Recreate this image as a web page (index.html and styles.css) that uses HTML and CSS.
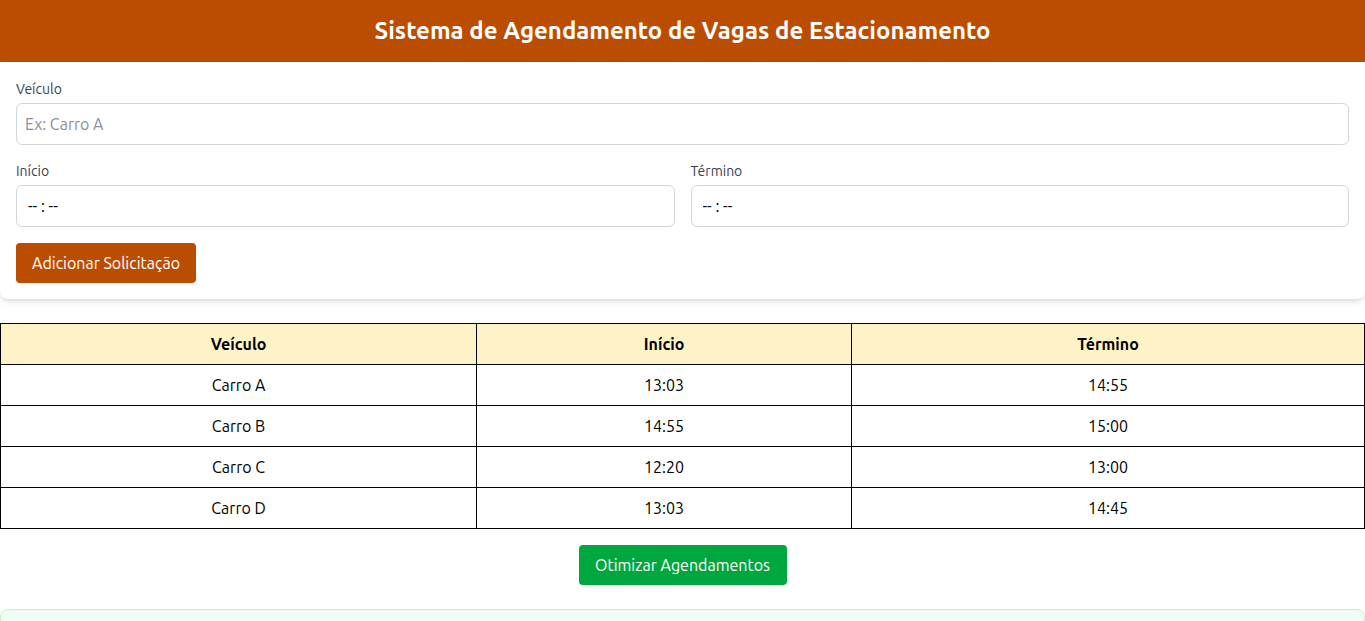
FILE: index.html
```html
<!DOCTYPE html>
<html lang="pt-BR">
<head>
<meta charset="utf-8">
<title>Sistema de Agendamento de Vagas de Estacionamento</title>
<link rel="stylesheet" href="styles.css">
</head>
<body>
<header class="topbar">
  <h1 class="title">Sistema de Agendamento de Vagas de Estacionamento</h1>
</header>
<main>
  <section class="card">
    <div class="field-group">
      <label class="label">Veículo</label>
      <input class="field" type="text" placeholder="Ex: Carro A">
    </div>
    <div class="row">
      <div class="field-group">
        <label class="label">Início</label>
        <input class="field time" type="text" value="-- : --">
      </div>
      <div class="field-group">
        <label class="label">Término</label>
        <input class="field time" type="text" value="-- : --">
      </div>
    </div>
    <button class="btn btn-add">Adicionar Solicitação</button>
  </section>

  <table class="grid">
    <colgroup>
      <col class="c1"><col class="c2"><col class="c3">
    </colgroup>
    <thead>
      <tr><th>Veículo</th><th>Início</th><th>Término</th></tr>
    </thead>
    <tbody>
      <tr><td>Carro A</td><td>13:03</td><td>14:55</td></tr>
      <tr><td>Carro B</td><td>14:55</td><td>15:00</td></tr>
      <tr><td>Carro C</td><td>12:20</td><td>13:00</td></tr>
      <tr><td>Carro D</td><td>13:03</td><td>14:45</td></tr>
    </tbody>
  </table>

  <div class="actions">
    <button class="btn btn-opt">Otimizar Agendamentos</button>
  </div>

  <section class="result">
    <h2 class="result-title">Resultado</h2>
  </section>
</main>
</body>
</html>
```

FILE: styles.css
```css
html { scrollbar-width: none; }
html::-webkit-scrollbar { width: 0; height: 0; }
* { box-sizing: border-box; }
body {
  margin: 0;
  font-family: Ubuntu, Lato, "Noto Sans", sans-serif;
  color: #000;
  background: #fff;
}
.topbar {
  background: #bb4d00;
  padding: 15px 16px 15px;
  text-align: center;
}
.title {
  margin: 0;
  color: #fff;
  font-size: 24px;
  line-height: 32px;
  font-weight: 700;
}
.card {
  background: #fff;
  padding: 17px 16px 16px;
  border-radius: 0 0 8px 8px;
  box-shadow: 0 4px 6px -1px rgba(0,0,0,0.1), 0 2px 4px -2px rgba(0,0,0,0.1);
  display: flex;
  flex-direction: column;
  gap: 16px;
  align-items: flex-start;
}
.field-group {
  display: flex;
  flex-direction: column;
  width: 100%;
}
.row {
  display: grid;
  grid-template-columns: 1fr 1fr;
  gap: 16px;
  width: 100%;
}
.label {
  font-size: 14px;
  line-height: 20px;
  color: #364153;
  margin-bottom: 4px;
}
.field {
  width: 100%;
  height: 42px;
  border: 1px solid #d1d5dc;
  border-radius: 6px;
  padding: 8px;
  font: inherit;
  font-size: 16px;
  line-height: 24px;
  color: #000;
  outline: none;
}
.field::placeholder { color: #8a8f98; }
.field.time { padding-left: 11px; }
.btn {
  border: 0;
  border-radius: 4px;
  padding: 8px 16px;
  font: inherit;
  font-size: 16px;
  line-height: 24px;
  color: #fff;
  cursor: pointer;
}
.btn-add { background: #bb4d00; }
.grid {
  width: 100%;
  margin-top: 24px;
  border-collapse: collapse;
  font-size: 16px;
}
.c1 { width: 34.9%; }
.c2 { width: 27.5%; }
.c3 { width: 37.6%; }
.grid th, .grid td {
  border: 1px solid #000;
  padding: 8px;
  line-height: 24px;
  text-align: center;
}
.grid th {
  background: #fef3c6;
  font-weight: 700;
}
.actions {
  display: flex;
  justify-content: center;
  margin-top: 16px;
}
.btn-opt { background: #00a63e; width: 208px; padding: 8px 0; }
.result {
  margin-top: 24px;
  background: #f0fdf4;
  border: 1px solid #b9f8cf;
  border-radius: 8px;
  padding: 24px 16px 16px;
}
.result-title {
  margin: 0;
  font-size: 20px;
  line-height: 28px;
}
```
